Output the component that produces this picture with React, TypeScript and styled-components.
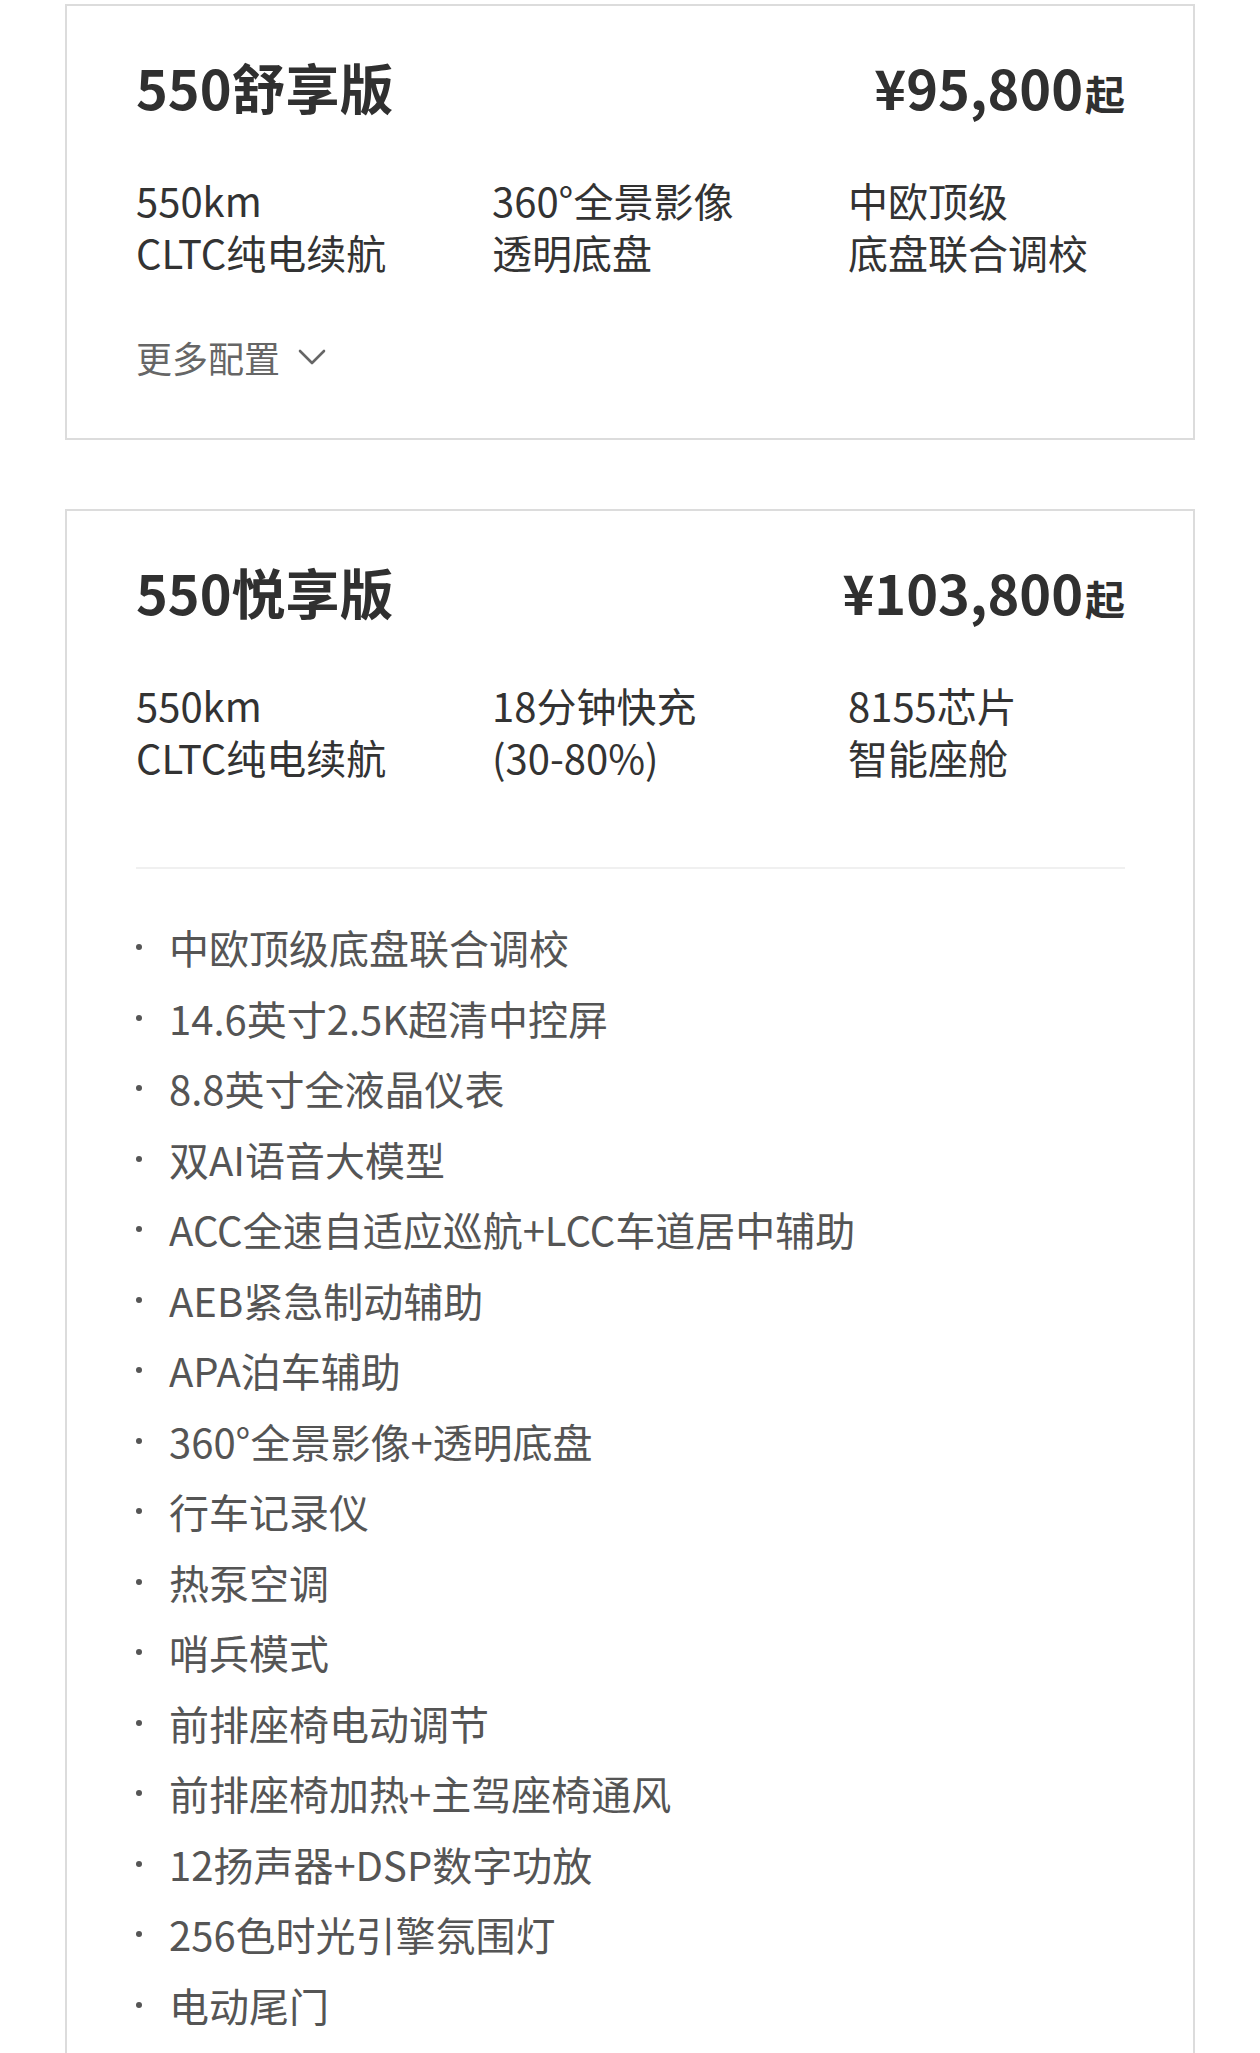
import React from 'react'
import styled, { createGlobalStyle } from 'styled-components'

type Spec = [string, string]

type Trim = {
  id: string
  name: string
  price: string
  specs: Spec[]
  features?: string[]
}

const trims: Trim[] = [
  {
    id: 'comfort',
    name: '550舒享版',
    price: '¥95,800',
    specs: [
      ['550km', 'CLTC纯电续航'],
      ['360°全景影像', '透明底盘'],
      ['中欧顶级', '底盘联合调校'],
    ],
  },
  {
    id: 'joy',
    name: '550悦享版',
    price: '¥103,800',
    specs: [
      ['550km', 'CLTC纯电续航'],
      ['18分钟快充', '(30-80%)'],
      ['8155芯片', '智能座舱'],
    ],
    features: [
      '中欧顶级底盘联合调校',
      '14.6英寸2.5K超清中控屏',
      '8.8英寸全液晶仪表',
      '双AI语音大模型',
      'ACC全速自适应巡航+LCC车道居中辅助',
      'AEB紧急制动辅助',
      'APA泊车辅助',
      '360°全景影像+透明底盘',
      '行车记录仪',
      '热泵空调',
      '哨兵模式',
      '前排座椅电动调节',
      '前排座椅加热+主驾座椅通风',
      '12扬声器+DSP数字功放',
      '256色时光引擎氛围灯',
      '电动尾门',
    ],
  },
]

const Chevron = () => (
  <svg width="28" height="16" viewBox="0 0 28 16" fill="none">
    <polyline points="2,2 14,14 26,2" stroke="#666" strokeWidth="2.6" strokeLinecap="round" strokeLinejoin="round" />
  </svg>
)

const App = () => {
  return (
    <Page>
      <GlobalStyle />
      {trims.map(trim => (
        <Card key={trim.id}>
          <Header>
            <Name>{trim.name}</Name>
            <Price>
              {trim.price}
              <From>起</From>
            </Price>
          </Header>
          <Specs>
            {trim.specs.map(([top, bottom]) => (
              <SpecItem key={top}>
                <div>{top}</div>
                <div>{bottom}</div>
              </SpecItem>
            ))}
          </Specs>
          {trim.features ? (
            <>
              <Divider />
              <Features>
                {trim.features.map(f => (
                  <Feature key={f}>{f}</Feature>
                ))}
              </Features>
            </>
          ) : (
            <More>
              更多配置
              <Chevron />
            </More>
          )}
        </Card>
      ))}
    </Page>
  )
}

export default App

const GlobalStyle = createGlobalStyle`
  body {
    margin: 0;
    background: #fff;
    font-family: "Noto Sans CJK SC", "Noto Sans", sans-serif;
    color: #333;
  }
`

const Page = styled.div`
  display: flex;
  flex-direction: column;
  gap: 69px;
  padding: 4px 65px 40px;
`

const Card = styled.section`
  border: 2px solid #dcdcdc;
  padding: 51px 68px 56px 69px;
  background: #fff;
`

const Header = styled.div`
  display: flex;
  justify-content: space-between;
  align-items: baseline;
  height: 60px;
  line-height: 60px;
`

const Name = styled.h2`
  margin: 0;
  font-size: 54px;
  font-weight: 700;
  color: #303030;
`

const Price = styled.div`
  font-size: 54px;
  font-weight: 700;
  color: #303030;
`

const From = styled.span`
  font-size: 40px;
  margin-left: 2px;
`

const Specs = styled.div`
  display: grid;
  grid-template-columns: 356px 356px 1fr;
  margin-top: 57px;
  font-size: 40px;
  line-height: 52px;
  color: #333;
`

const SpecItem = styled.div`
  white-space: nowrap;
`

const More = styled.div`
  display: flex;
  align-items: center;
  gap: 18px;
  margin-top: 54px;
  font-size: 36px;
  line-height: 50px;
  color: #666;
`

const Divider = styled.div`
  height: 2px;
  background: #f0f0f0;
  margin-top: 84px;
`

const Features = styled.ul`
  list-style: none;
  margin: 43px 0 0;
  padding: 0;
`

const Feature = styled.li`
  display: flex;
  align-items: center;
  font-size: 40px;
  line-height: 70.5px;
  color: #555;

  &::before {
    content: '';
    flex: none;
    width: 6px;
    height: 6px;
    border-radius: 50%;
    background: #555;
    margin-right: 27px;
  }
`
